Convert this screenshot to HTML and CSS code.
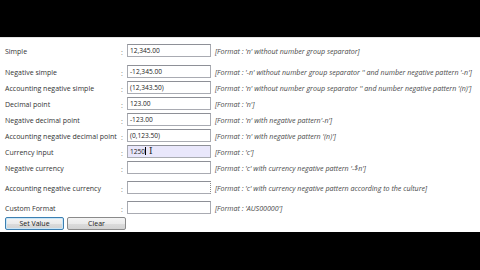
FILE: index.html
```html
<!DOCTYPE html>
<html lang="en">
<head>
    <meta charset="UTF-8">
    <title>Numeric formats</title>
    <link rel="stylesheet" href="styles.css">
</head>
<body>
    <div class="screen">
        <div class="form">
            <div class="row">
                <span class="label">Simple</span>
                <span class="colon">:</span>
                <div class="input">12,345.00</div>
                <span class="hint">[Format : 'n' without number group separator]</span>
            </div>
            <div class="row row-wide">
                <span class="label">Negative simple</span>
                <span class="colon">:</span>
                <div class="input">-12,345.00</div>
                <span class="hint">[Format : '-n' without number group separator '' and number negative pattern '-n']</span>
            </div>
            <div class="row">
                <span class="label">Accounting negative simple</span>
                <span class="colon">:</span>
                <div class="input">(12,343.50)</div>
                <span class="hint">[Format : 'n' without number group separator '' and number negative pattern '(n)']</span>
            </div>
            <div class="row">
                <span class="label">Decimal point</span>
                <span class="colon">:</span>
                <div class="input">123.00</div>
                <span class="hint">[Format : 'n']</span>
            </div>
            <div class="row">
                <span class="label">Negative decimal point</span>
                <span class="colon">:</span>
                <div class="input">-123.00</div>
                <span class="hint">[Format : 'n' with negative pattern'-n']</span>
            </div>
            <div class="row">
                <span class="label">Accounting negative decimal point</span>
                <span class="colon">:</span>
                <div class="input">(0,123.50)</div>
                <span class="hint">[Format : 'n' with negative pattern '(n)']</span>
            </div>
            <div class="row">
                <span class="label">Currency input</span>
                <span class="colon">:</span>
                <div class="input input-active">1250<span class="caret"></span><span class="ibeam">I</span></div>
                <span class="hint">[Format : 'c']</span>
            </div>
            <div class="row">
                <span class="label">Negative currency</span>
                <span class="colon">:</span>
                <div class="input"></div>
                <span class="hint">[Format : 'c' with currency negative pattern '-$n']</span>
            </div>
            <div class="row row-wide2">
                <span class="label">Accounting negative currency</span>
                <span class="colon">:</span>
                <div class="input input-dotted"></div>
                <span class="hint">[Format : 'c' with currency negative pattern according to the culture]</span>
            </div>
            <div class="row row-wide2">
                <span class="label">Custom Format</span>
                <span class="colon">:</span>
                <div class="input"></div>
                <span class="hint">[Format : 'AUS00000']</span>
            </div>
            <div class="buttons">
                <button class="btn btn-focus">Set Value</button>
                <button class="btn">Clear</button>
            </div>
        </div>
    </div>
</body>
</html>
```

FILE: styles.css
```css
* {
    margin: 0;
    padding: 0;
    box-sizing: border-box;
}
body {
    background: #000;
    width: 480px;
    height: 270px;
    overflow: hidden;
    font-family: 'Open Sans', 'DejaVu Sans', sans-serif;
}
.screen {
    margin-top: 37px;
    height: 195px;
    background: #fff;
    border-top: 1px solid #e4e4e4;
}
.form {
    display: flex;
    flex-direction: column;
    gap: 3px;
    padding: 6px 0 0 5px;
}
.row {
    display: grid;
    grid-template-columns: 112px 10px 84px auto;
    align-items: center;
    height: 13px;
    font-size: 7px;
    color: #333;
}
.row-wide {
    margin-top: 5px;
}
.row-wide2 {
    margin-top: 4px;
}
.label {
    white-space: nowrap;
    padding-top: 1px;
}
.colon {
    text-align: center;
    color: #777;
    padding-top: 3px;
}
.input {
    position: relative;
    height: 13px;
    border: 1px solid #a9abb2;
    border-top-color: #8e9097;
    background: #fff;
    padding: 0 2px;
    line-height: 11px;
    font-size: 6.6px;
    color: #222;
    white-space: nowrap;
}
.input-active {
    background: #e9e7fb;
}
.input-dotted {
    border-right: 1px dotted #888;
}
.caret {
    display: inline-block;
    width: 1px;
    height: 8px;
    background: #000;
    vertical-align: -1px;
}
.ibeam {
    position: absolute;
    left: 21px;
    top: 0;
    font-size: 9px;
    line-height: 11px;
    font-family: 'DejaVu Serif', serif;
    color: #222;
}
.hint {
    padding-left: 4px;
    font-style: italic;
    color: #4a4a4a;
    white-space: nowrap;
    font-size: 7.1px;
}
.buttons {
    display: flex;
    gap: 3px;
}
.btn {
    width: 59px;
    height: 13px;
    font-family: inherit;
    font-size: 7px;
    color: #222;
    border: 1px solid #8a8a8a;
    border-radius: 2px;
    background: linear-gradient(#f4f4f4 0%, #ebebeb 50%, #dcdcdc 51%, #d2d2d2 100%);
}
.btn-focus {
    border-color: #3c7fb1;
    box-shadow: inset 0 0 0 1px #c9e6f8;
}
```
